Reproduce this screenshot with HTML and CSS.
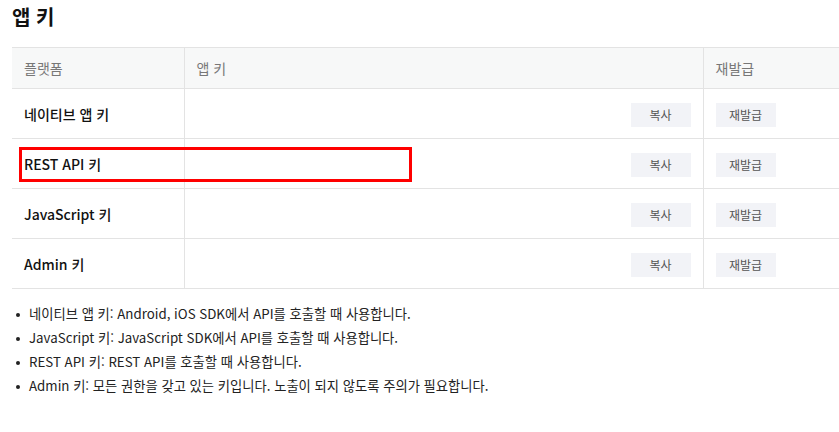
FILE: index.html
```html
<!DOCTYPE html>
<html lang="ko">
<head>
<meta charset="utf-8">
<link rel="stylesheet" href="styles.css">
</head>
<body>
<div class="page">
  <h2 class="title">앱 키</h2>
  <table class="keys">
    <colgroup>
      <col class="c1"><col class="c2"><col class="c3">
    </colgroup>
    <thead>
      <tr><th>플랫폼</th><th>앱 키</th><th>재발급</th></tr>
    </thead>
    <tbody>
      <tr><td class="name">네이티브 앱 키</td><td class="key"><button class="btn">복사</button></td><td class="re"><button class="btn">재발급</button></td></tr>
      <tr><td class="name">REST API 키</td><td class="key"><button class="btn">복사</button></td><td class="re"><button class="btn">재발급</button></td></tr>
      <tr><td class="name">JavaScript 키</td><td class="key"><button class="btn">복사</button></td><td class="re"><button class="btn">재발급</button></td></tr>
      <tr><td class="name">Admin 키</td><td class="key"><button class="btn">복사</button></td><td class="re"><button class="btn">재발급</button></td></tr>
    </tbody>
  </table>
  <ul class="notes">
    <li>네이티브 앱 키: Android, iOS SDK에서 API를 호출할 때 사용합니다.</li>
    <li>JavaScript 키: JavaScript SDK에서 API를 호출할 때 사용합니다.</li>
    <li>REST API 키: REST API를 호출할 때 사용합니다.</li>
    <li>Admin 키: 모든 권한을 갖고 있는 키입니다. 노출이 되지 않도록 주의가 필요합니다.</li>
  </ul>
  <div class="highlight"></div>
</div>
</body>
</html>
```

FILE: styles.css
```css
html, body {
  margin: 0;
  padding: 0;
  background: #fff;
}
body {
  font-family: "Noto Sans CJK KR", "Noto Sans", sans-serif;
  color: #111;
}
.page {
  position: relative;
  padding: 0 0 0 12px;
}
.title {
  margin: 0;
  padding-top: 2px;
  font-size: 20px;
  font-weight: 700;
  line-height: 30px;
  height: 45px;
  color: #111;
}
.keys {
  border-collapse: collapse;
  width: 100%;
  table-layout: fixed;
  font-size: 14px;
}
.c1 { width: 172px; }
.c2 { width: 519px; }
.keys th {
  background: #f7f8f8;
  color: #777;
  font-weight: 400;
  text-align: left;
  height: 40px;
  padding: 0 0 0 12px;
  border-top: 1px solid #e3e3e3;
  border-bottom: 1px solid #e3e3e3;
  border-left: 1px solid #e3e3e3;
}
.keys th:first-child, .keys td:first-child { border-left: none; }
.keys td {
  height: 49px;
  padding: 0;
  border-bottom: 1px solid #e3e3e3;
  border-left: 1px solid #e3e3e3;
}
.keys td.name {
  padding-left: 12px;
  font-weight: 500;
  color: #111;
}
.keys td.key {
  text-align: right;
  padding-right: 12px;
}
.keys td.re {
  padding-left: 12px;
}
.btn {
  width: 60px;
  height: 24px;
  border: none;
  background: #f2f3f7;
  color: #555;
  font-family: inherit;
  font-size: 12px;
  padding: 0;
  margin-top: 2px;
  vertical-align: middle;
}
.notes {
  list-style: none;
  margin: 13px 0 0;
  padding: 0;
  font-size: 13.3px;
  color: #222;
}
.notes li {
  position: relative;
  padding-left: 17px;
  line-height: 24px;
}
.notes li::before {
  content: "";
  position: absolute;
  left: 4px;
  top: 11px;
  width: 4px;
  height: 4px;
  border-radius: 50%;
  background: #222;
}
.highlight {
  position: absolute;
  left: 19px;
  top: 147px;
  width: 387px;
  height: 29px;
  border: 3px solid #f00;
}
```
